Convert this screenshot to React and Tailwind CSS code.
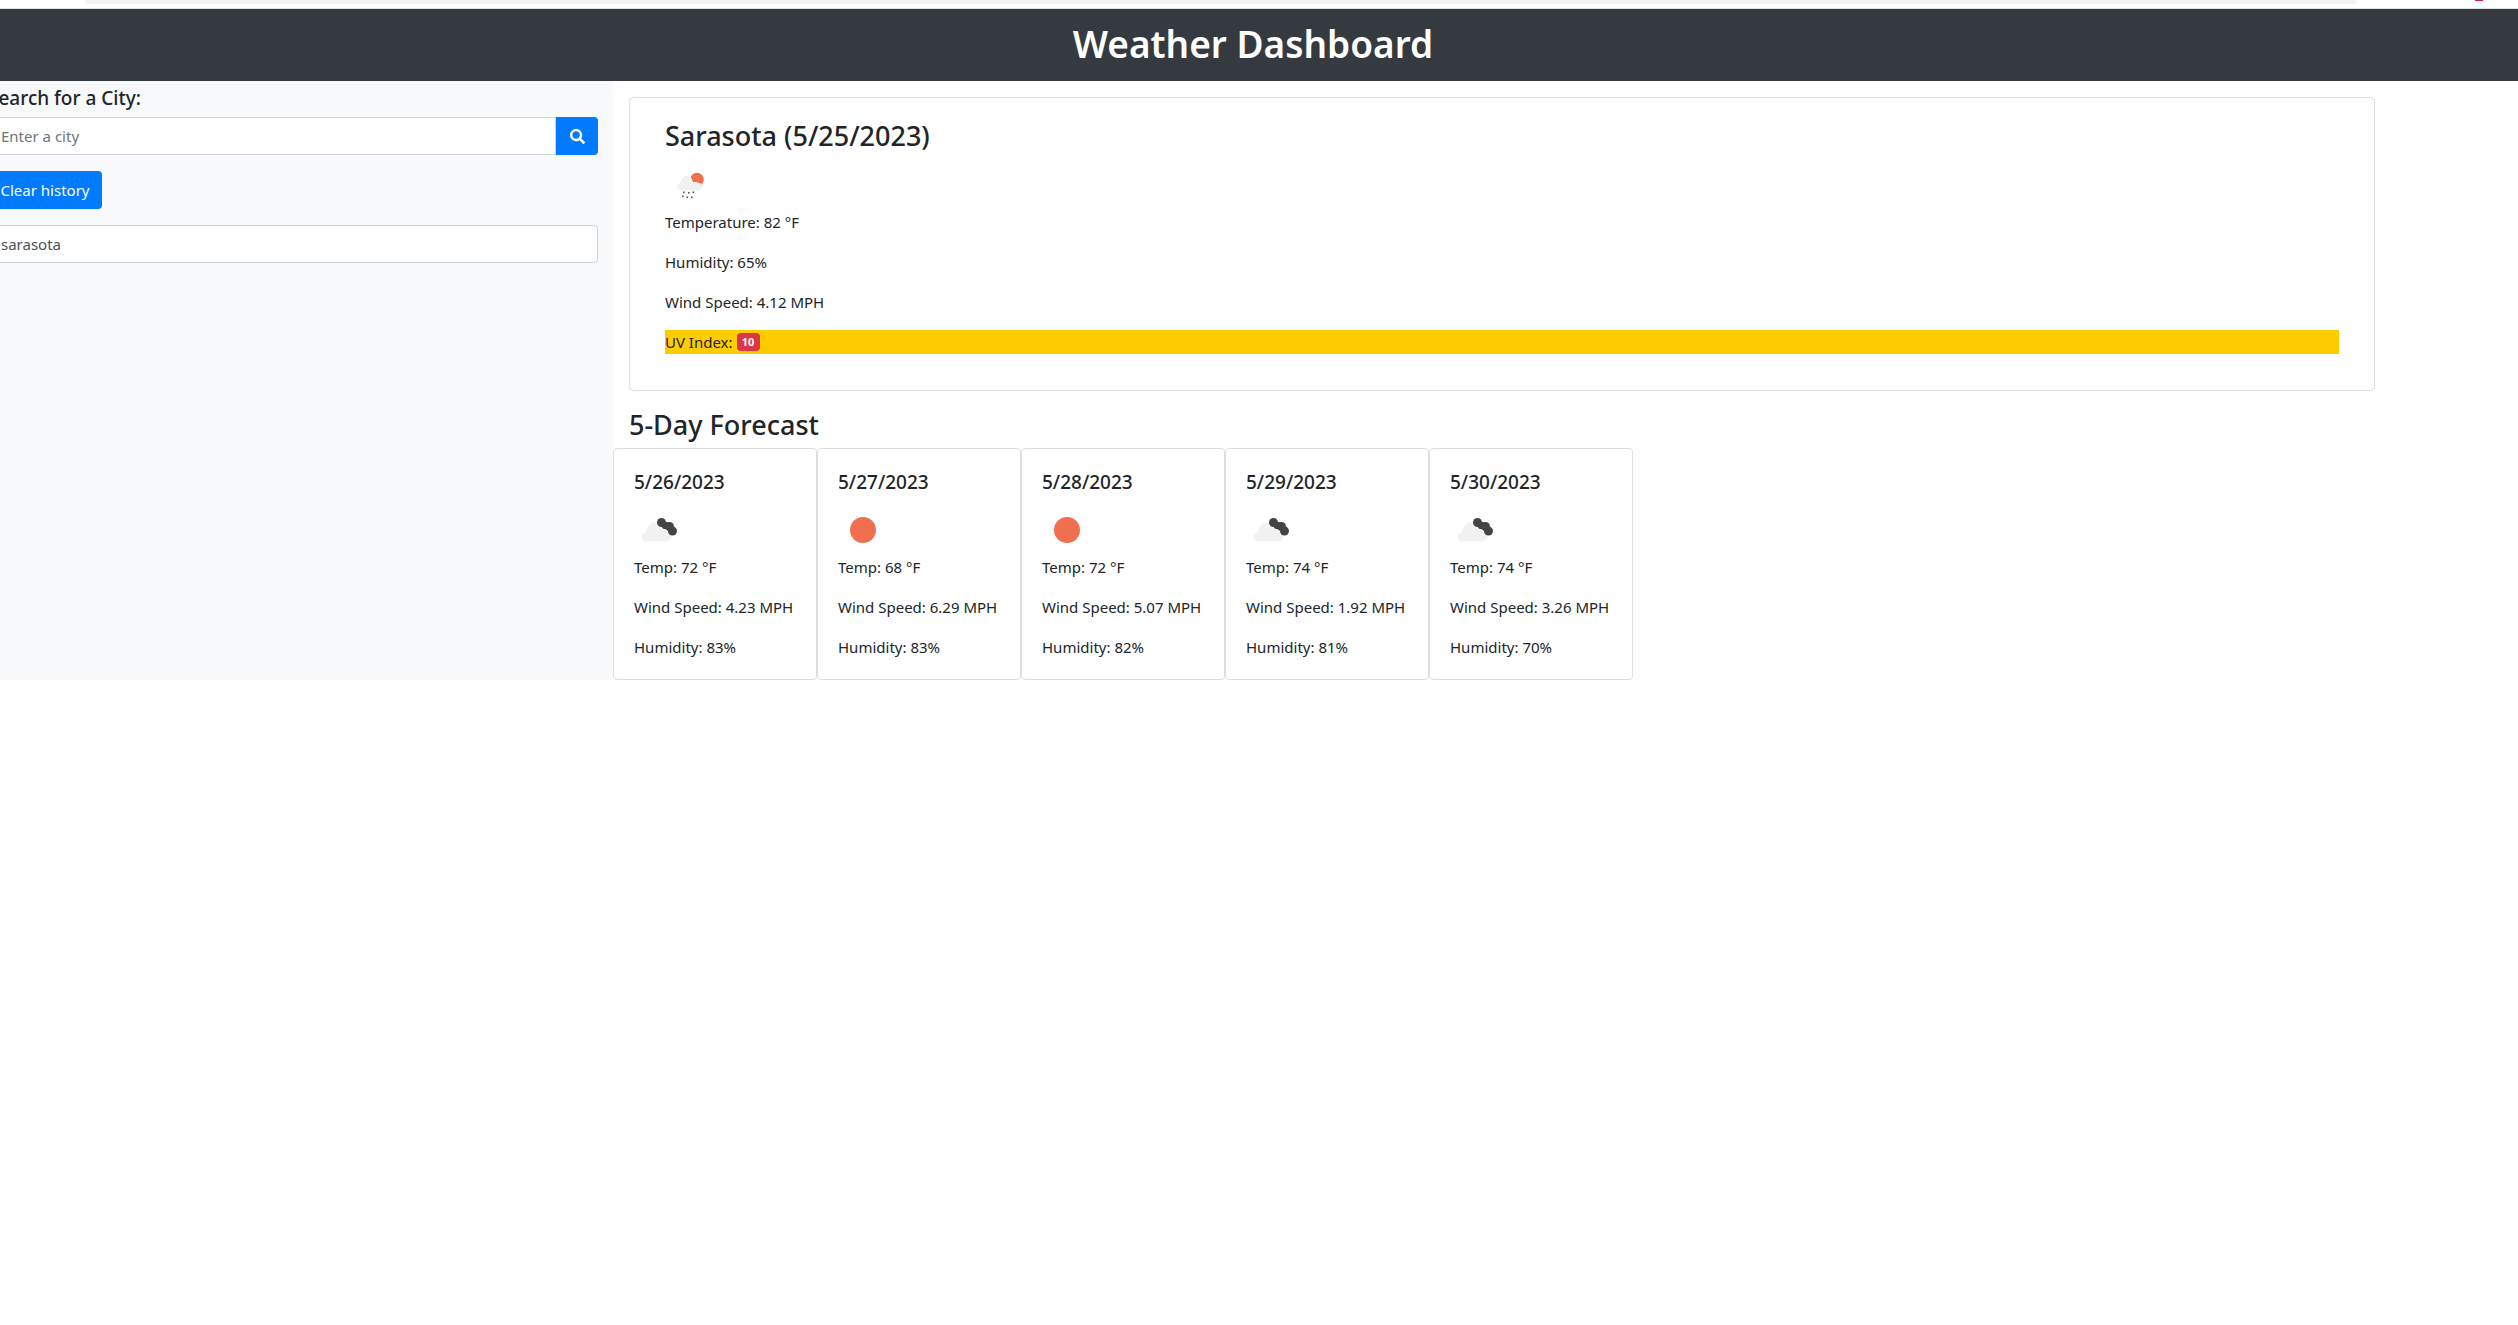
import React from 'react';
import { FaSearch } from 'react-icons/fa';

const forecast = [
  { date: '5/26/2023', icon: 'rain', temp: 72, wind: '4.23', humidity: 83 },
  { date: '5/27/2023', icon: 'sun', temp: 68, wind: '6.29', humidity: 83 },
  { date: '5/28/2023', icon: 'sun', temp: 72, wind: '5.07', humidity: 82 },
  { date: '5/29/2023', icon: 'rain', temp: 74, wind: '1.92', humidity: 81 },
  { date: '5/30/2023', icon: 'rain', temp: 74, wind: '3.26', humidity: 70 },
];

function CloudDarkIcon() {
  return (
    <svg viewBox="0 0 50 50" className="w-[50px] h-[50px] block">
      <path
        d="M12 36.500c-2.600 0-4.500-1.900-4.500-4.400 0-2.300 1.700-4.200 4-4.400 1-5.600 4.800-10.200 9.600-10.200 4 0 7.400 3.400 8.800 7.900.6-.2 1.200-.3 1.800-.3 3.400 0 5.800 2.700 5.800 5.700 0 3-2.300 5.700-5 5.700z"
        fill="#f1f1f1"
      />
      <g fill="#444444">
        <circle cx="27.500" cy="17.500" r="4.500" />
        <circle cx="31.500" cy="20.500" r="3.800" />
        <circle cx="35.500" cy="21.500" r="4.500" />
        <circle cx="38.500" cy="26" r="4.500" />
      </g>
    </svg>
  );
}

function SunIcon() {
  return (
    <svg viewBox="0 0 50 50" className="w-[50px] h-[50px] block">
      <circle cx="25" cy="25" r="13" fill="#ef6f4e" />
    </svg>
  );
}

function PartlyRainIcon() {
  return (
    <svg viewBox="0 0 50 50" className="w-[50px] h-[50px] block">
      <circle cx="32" cy="19.500" r="6.800" fill="#ef6f4e" />
      <path
        d="M15.500 30.500c-2 0-3.500-1.500-3.500-3.400 0-1.700 1.300-3.100 3-3.300.8-4 3.300-8.300 7-8.300 2.800 0 5 2.700 6.200 6.800.5-.2 1-.3 1.500-.3 3 0 7.800 1.800 7.800 4.400 0 2.400-3.800 4.100-6 4.100z"
        fill="#f1f1f1"
      />
      <g fill="#555555">
        <rect x="18" y="31.500" width="1.600" height="1.600" />
        <rect x="23" y="32" width="1.600" height="1.600" />
        <rect x="27.500" y="31.500" width="1.600" height="1.600" />
        <rect x="17" y="35.500" width="1.600" height="1.600" />
        <rect x="21.500" y="36.500" width="1.600" height="1.600" />
        <rect x="26" y="36.500" width="1.600" height="1.600" />
      </g>
    </svg>
  );
}

export default function App() {
  return (
    <div className="min-h-[1325px] bg-white overflow-hidden text-[#212529] font-['Noto_Sans',sans-serif] text-[15px]">
      <div className="h-[9px] border-b border-[#dee2e6] flex justify-between pl-[85px] pr-[35px]">
        <div className="w-[2272px] h-1 bg-[#f1f3f4] rounded-b-xl" />
        <div className="w-2 h-px bg-[#d81b60]" />
      </div>

      <header className="h-[72px] bg-[#343a40] flex items-center justify-center pr-3 pb-1">
        <h1 className="text-white text-[37px] font-semibold leading-none">Weather Dashboard</h1>
      </header>

      <div className="flex items-stretch">
        <aside className="w-[625px] -ml-3 pr-[15px] bg-[#f8f9fa] shrink-0">
          <h2 className="text-[19px] font-medium leading-6 pt-[5px] mb-[7px]">Search for a City:</h2>
          <div className="flex h-[38px]">
            <input
              className="flex-1 min-w-0 bg-white border border-[#ced4da] pt-px px-3 outline-none placeholder:text-[#6c757d]"
              placeholder="Enter a city"
            />
            <button className="w-[42px] bg-[#007bff] text-white rounded-r flex items-center justify-center">
              <FaSearch className="w-[15px] h-[15px]" />
            </button>
          </div>
          <button className="mt-4 h-[38px] w-[114px] bg-[#007bff] text-white rounded block">Clear history</button>
          <div className="mt-4 h-[38px] pt-px px-3 flex items-center bg-white border border-[#ced4da] rounded-r text-[#495057]">
            sarasota
          </div>
        </aside>

        <main className="flex-1 min-w-0">
          <section className="ml-4 mt-4 w-[1746px] h-[294px] border border-[#dfdfdf] rounded px-[35px] pt-[21px]">
            <h2 className="text-[27px] font-medium leading-[34px] mb-[7px]">Sarasota (5/25/2023)</h2>
            <PartlyRainIcon />
            <p className="leading-6 mb-4">Temperature: 82 °F</p>
            <p className="leading-6 mb-4">Humidity: 65%</p>
            <p className="leading-6 mb-4">Wind Speed: 4.12 MPH</p>
            <p className="leading-6 bg-[#ffcc00] flex items-center gap-1">
              UV Index:
              <span className="bg-[#dc3545] text-white text-[11px] font-bold rounded h-[18px] w-[23px] flex items-center justify-center">10</span>
            </p>
          </section>

          <h3 className="ml-4 mt-[17px] mb-[6px] text-[27px] font-medium leading-[34px]">5-Day Forecast</h3>

          <div className="flex">
            {forecast.map((day) => (
              <div key={day.date} className="w-[204px] h-[232px] border border-[#dfdfdf] rounded px-5 pt-[21px]">
                <h4 className="text-[19px] font-medium leading-6 mb-[11px]">{day.date}</h4>
                {day.icon === 'sun' ? <SunIcon /> : <CloudDarkIcon />}
                <p className="leading-6 mb-4">Temp: {day.temp} °F</p>
                <p className="leading-6 mb-4">Wind Speed: {day.wind} MPH</p>
                <p className="leading-6">Humidity: {day.humidity}%</p>
              </div>
            ))}
          </div>
        </main>
      </div>
    </div>
  );
}
